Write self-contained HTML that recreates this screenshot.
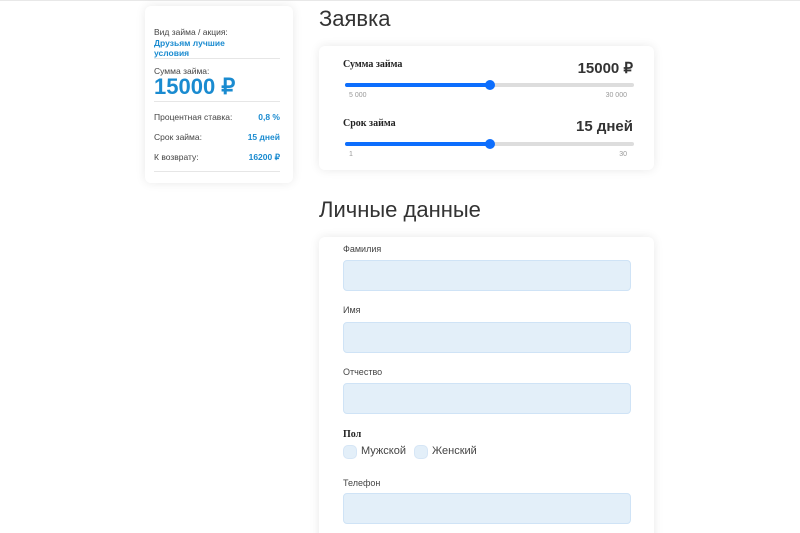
<!DOCTYPE html><html><head><meta charset="utf-8"><style>
html,body{margin:0;width:800px;height:533px;overflow:hidden}
body{background:#fff;position:relative;font-family:"Liberation Sans",sans-serif;color:#333}
.a{position:absolute}
.card{position:absolute;background:#fff;border-radius:6px;box-shadow:0 0 10px rgba(0,0,0,.09)}
.s{font-size:8.5px;color:#444}
.b{color:#1a8bd0;font-weight:bold;font-size:8.5px}
.hr{position:absolute;left:154px;width:126px;height:1px;background:#e6e6e6}
.inp{position:absolute;left:343px;width:286px;height:29px;background:#e3eff9;border:1px solid #cfe3f6;border-radius:4px}
.lbl{position:absolute;left:343px;font-size:9px;color:#444}
.trk{position:absolute;left:345px;width:289px;height:4px;background:#ddd;border-radius:2px}
.fill{position:absolute;left:0;top:0;width:144px;height:4px;background:#0d6efd;border-radius:2px}
.knob{position:absolute;left:140px;top:-3px;width:10px;height:10px;border-radius:50%;background:#0d6efd}
.h{position:absolute;font-size:22px;color:#333}
.ser{font-family:"Liberation Serif",serif;font-weight:bold;font-size:10px;color:#222}
.rb{position:absolute;width:12px;height:12px;background:#e3eff9;border:1px solid #d6e6f6;border-radius:5px}
</style></head><body>
<div class="a" style="left:0;top:0;width:800px;height:1px;background:#e8e8e8"></div>
<div class="card" style="left:145px;top:6px;width:148px;height:177px"></div>
<div class="a s" style="left:154px;top:27px">Вид займа / акция:</div>
<div class="a b" style="left:154px;top:38px;line-height:10px">Друзьям лучшие<br>условия</div>
<div class="hr" style="top:58px"></div>
<div class="a s" style="left:154px;top:66px">Сумма займа:</div>
<div class="a" style="left:154px;top:74px;font-size:22px;font-weight:bold;color:#1a8bd0">15000 ₽</div>
<div class="hr" style="top:101px"></div>
<div class="a s" style="left:154px;top:112px">Процентная ставка:</div><div class="a b" style="right:520px;top:112px">0,8 %</div>
<div class="a s" style="left:154px;top:132px">Срок займа:</div><div class="a b" style="right:520px;top:132px">15 дней</div>
<div class="a s" style="left:154px;top:152px">К возврату:</div><div class="a b" style="right:520px;top:152px">16200 ₽</div>
<div class="hr" style="top:171px"></div>

<div class="h" style="left:319px;top:6px">Заявка</div>
<div class="card" style="left:319px;top:46px;width:335px;height:124px"></div>
<div class="a ser" style="left:343px;top:59px">Сумма займа</div>
<div class="a" style="right:167px;top:59px;font-size:15px;font-weight:bold">15000 ₽</div>
<div class="trk" style="top:83px"><div class="fill"></div><div class="knob"></div></div>
<div class="a" style="left:349px;top:92px;font-size:7px;color:#999">5 000</div>
<div class="a" style="right:173px;top:92px;font-size:7px;color:#999">30 000</div>
<div class="a ser" style="left:343px;top:118px">Срок займа</div>
<div class="a" style="right:167px;top:118px;font-size:15px;font-weight:bold">15 дней</div>
<div class="trk" style="top:142px"><div class="fill"></div><div class="knob"></div></div>
<div class="a" style="left:349px;top:151px;font-size:7px;color:#999">1</div>
<div class="a" style="right:173px;top:151px;font-size:7px;color:#999">30</div>

<div class="h" style="left:319px;top:197px">Личные данные</div>
<div class="card" style="left:319px;top:237px;width:335px;height:310px"></div>
<div class="lbl" style="top:244px">Фамилия</div><div class="inp" style="top:260px"></div>
<div class="lbl" style="top:305px">Имя</div><div class="inp" style="top:322px"></div>
<div class="lbl" style="top:367px">Отчество</div><div class="inp" style="top:383px"></div>
<div class="a ser" style="left:343px;top:429px">Пол</div>
<div class="rb" style="left:343px;top:445px"></div><div class="a" style="left:361px;top:445px;font-size:11px;color:#444">Мужской</div>
<div class="rb" style="left:414px;top:445px"></div><div class="a" style="left:432px;top:445px;font-size:11px;color:#444">Женский</div>
<div class="lbl" style="top:478px">Телефон</div><div class="inp" style="top:493px"></div>
</body></html>
